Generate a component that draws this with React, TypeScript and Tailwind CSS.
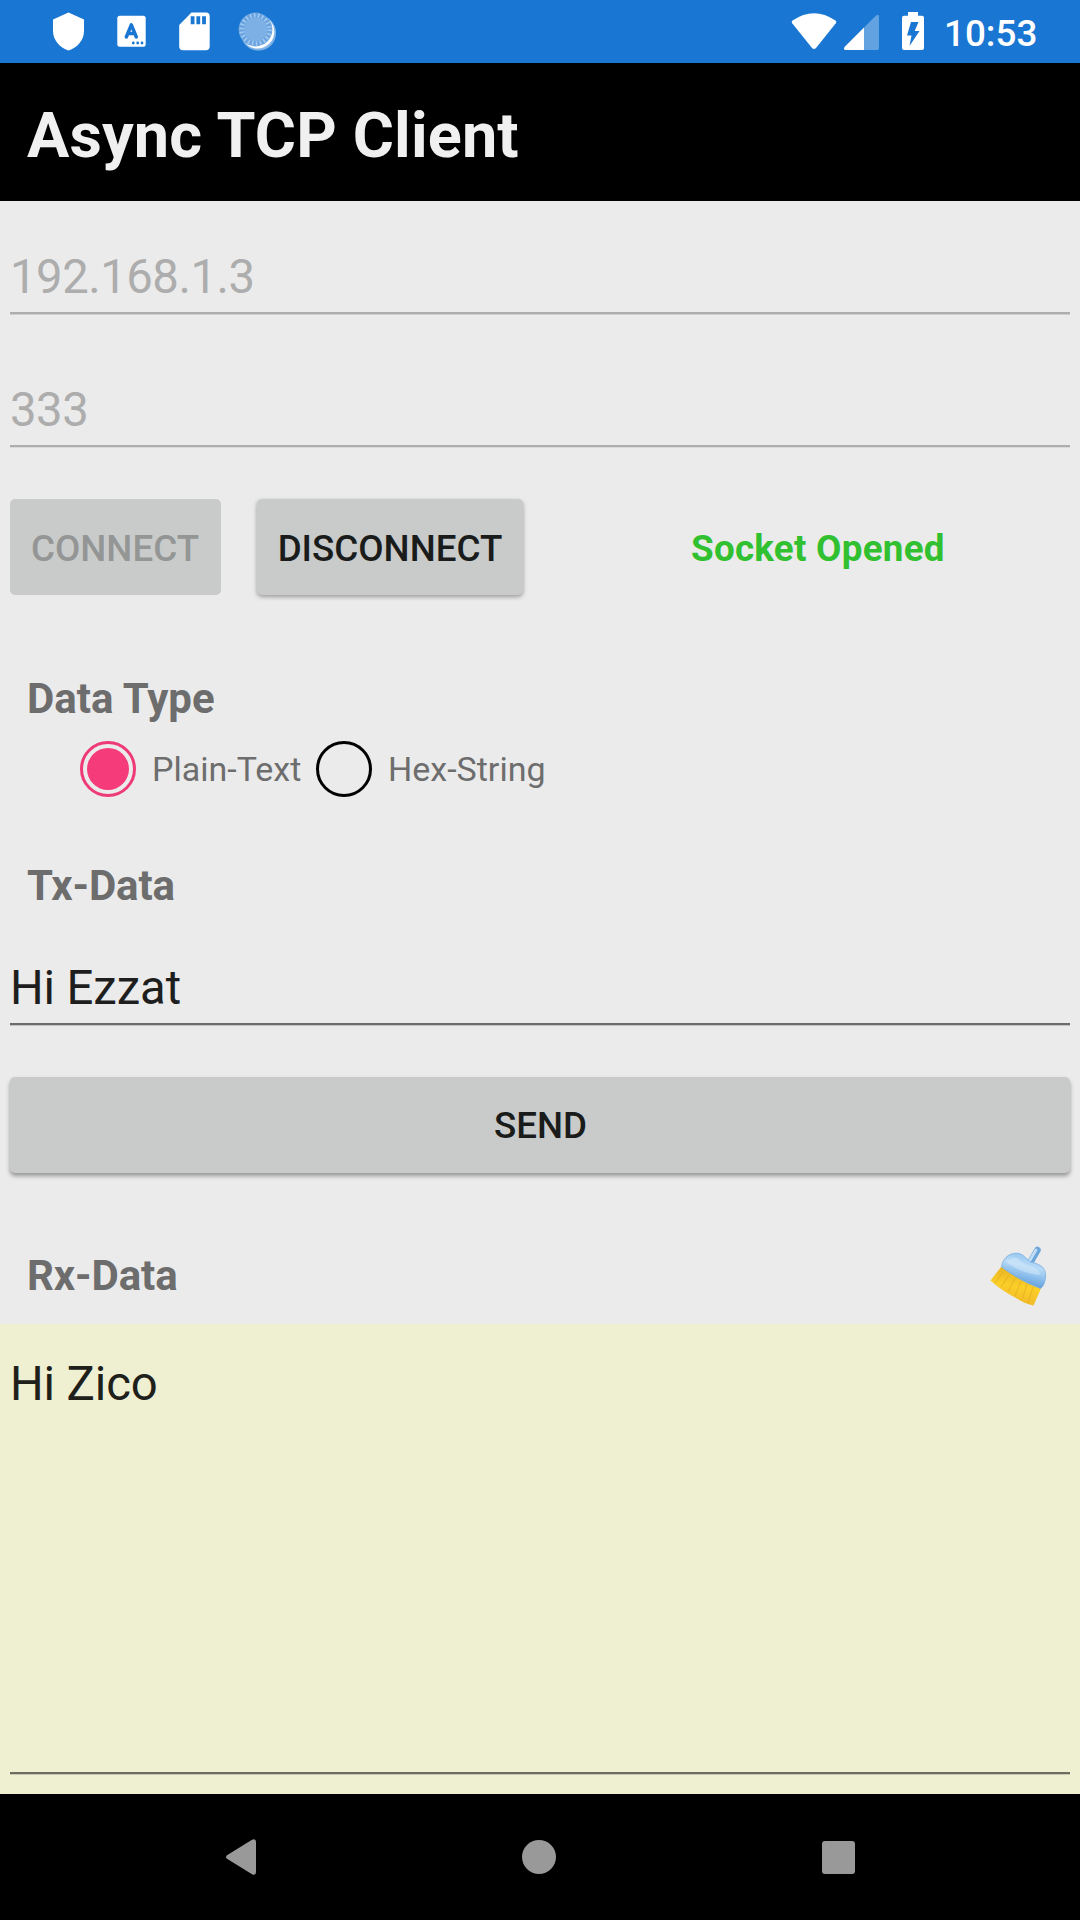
import type { ReactNode } from "react";

function StatusBar() {
  return (
    <header className="flex h-[63px] shrink-0 items-start justify-between bg-[#1976d2] text-white">
      <svg width="300" height="63" viewBox="0 0 300 63" fill="currentColor">
        <path d="M68.500 12.500 L84 19.500 V31 C84 40 77.500 47.500 68.500 50.500 C59.500 47.500 53 40 53 31 V19.500 Z" />
        <rect x="117.300" y="15.800" width="28.400" height="31" rx="2.500" />
        <path d="M126.300 37 L131.300 24.800 L136.300 37 M128 33.600 H134.800" fill="none" stroke="#1976d2" strokeWidth="3.500" strokeLinecap="round" strokeLinejoin="round" />
        <g fill="#1976d2">
          <circle cx="133.300" cy="43" r="1.400" />
          <circle cx="137.700" cy="43" r="1.400" />
          <circle cx="142" cy="43" r="1.400" />
        </g>
        <path d="M191.500 12.500 H206 Q209.700 12.500 209.700 16.200 V46.500 Q209.700 50.200 206 50.200 H183 Q179.200 50.200 179.200 46.500 V25 Z" />
        <path d="M190.700 16.200h3.800v8h-3.800z M196.400 16.200h3.800v8h-3.800z M202.100 16.200h3.800v8h-3.800z" fill="#1976d2" />
        <circle cx="258.500" cy="33" r="17.600" opacity=".45" />
        <circle cx="257.500" cy="31.700" r="16.800" />
        <circle cx="255.500" cy="29.500" r="16.900" fill="#6ba5e1" />
        <circle cx="255.500" cy="29.500" r="14" fill="none" stroke="#a5c9ee" strokeWidth="4.500" strokeDasharray="1.500 2.500" />
        <circle cx="255.500" cy="29.500" r="11.500" fill="#7db1e5" />
      </svg>
      <div className="flex h-[63px] items-start">
        <svg width="150" height="63" viewBox="780 0 150 63" fill="currentColor">
          <path d="M792.500 20.500 Q814 5.800 835.500 20.500 Q837 21.700 835.800 23.300 L816 48 Q814 50 812 48 L792.200 23.300 Q791 21.700 792.500 20.500 Z" />
          <path d="M864 27.500 V50 H846 Q842.500 50 845 46.500 Z" />
          <path d="M864 27.500 L876 15.500 Q879 13.500 879 16.500 V48 Q879 50 877 50 H864 Z" opacity=".32" />
          <path d="M908 12 H918 V15.800 H922 Q924 15.800 924 17.800 V48 Q924 50 922 50 H904 Q902 50 902 48 V17.800 Q902 15.800 904 15.800 H908 Z" />
          <path d="M911 22 H918.500 L914.700 31 H919.500 L909.500 46 L911.500 35.500 H907 Z" fill="#1976d2" />
        </svg>
        <span className="mr-[43px] w-[107px] pl-[14px] text-[36.800px] leading-[67px] font-medium whitespace-nowrap">10:53</span>
      </div>
    </header>
  );
}

function RaisedButton({ className, children }: { className: string; children: ReactNode }) {
  return (
    <button className={"flex h-24 items-center justify-center rounded-[5px] bg-[#c9cbca] text-[36.750px] leading-none font-medium " + className}>
      {children}
    </button>
  );
}

function SectionLabel({ children }: { children: ReactNode }) {
  return <h2 className="text-[42px] leading-[48px] font-bold text-[#6d6d6d]">{children}</h2>;
}

function Broom() {
  return (
    <svg width="66" height="66" viewBox="987 1242 66 66">
      <defs>
        <linearGradient id="head" x1="0.650" y1="0" x2="0.350" y2="1">
          <stop offset="0" stopColor="#8fc2ee" />
          <stop offset="0.350" stopColor="#b9dbf7" />
          <stop offset="0.650" stopColor="#84b9ea" />
          <stop offset="1" stopColor="#4c90d0" />
        </linearGradient>
        <linearGradient id="bristle" x1="0.600" y1="0" x2="0.400" y2="1">
          <stop offset="0" stopColor="#e6b024" />
          <stop offset="0.500" stopColor="#fbcf28" />
          <stop offset="1" stopColor="#f0b629" />
        </linearGradient>
      </defs>
      <path d="M1001 1267 L1041 1288.500 L1033.500 1305.500 Q1024 1303.500 1016 1298 Q1002 1291 990.500 1280.500 Z" fill="url(#bristle)" />
      <path d="M1003 1272 L995 1283 M1009 1275 L1001 1287 M1015 1278 L1008 1292 M1021 1281 L1015 1296 M1027 1284 L1022 1300 M1033 1287 L1028 1303" stroke="#dda51e" strokeWidth="1.200" opacity=".45" />
      <path d="M1030.500 1262 L1037.500 1250" stroke="#6aa6dc" strokeWidth="6.500" strokeLinecap="round" />
      <path d="M1029.500 1261 L1036 1250" stroke="#c3def4" strokeWidth="2.800" strokeLinecap="round" />
      <path d="M1001.500 1267 C1003 1256 1012 1252 1019 1253.500 C1025 1255 1027 1260.500 1031 1262 C1041 1264.500 1046 1268 1045.500 1276 C1045.500 1281 1044 1286 1040.500 1288.500 Q1020 1281 1001.500 1267 Z" fill="url(#head)" stroke="#79afe0" strokeWidth="0.800" />
      <path d="M1006 1262 Q1012 1256 1018 1258.500 Q1022 1263 1029 1266 Q1038 1268 1041 1275 Q1022 1274 1006 1262 Z" fill="#d6eafa" opacity=".5" />
    </svg>
  );
}

export default function App() {
  return (
    <div className="flex h-[1920px] w-[1080px] flex-col overflow-hidden bg-[#ebebeb] font-[Roboto,sans-serif]">
      <StatusBar />
      <div className="flex h-[138px] shrink-0 items-center bg-black pt-[7px] pl-[27px]">
        <h1 className="text-[63px] leading-none font-bold tracking-[0.150px] text-[#f0f0f0]">Async TCP Client</h1>
      </div>

      <main className="flex h-[1123px] shrink-0 flex-col">
        <div className="mx-2.5 h-[113px] border-b-2 border-[#adadad] pt-12 text-[47.250px] leading-[56px] tracking-[-0.480px] text-[#adadad] shadow-[0_1px_0_#cfcfcf]">192.168.1.3</div>
        <div className="mx-2.5 h-[133px] border-b-2 border-[#adadad] pt-[68px] text-[47.250px] leading-[56px] tracking-[-0.480px] text-[#adadad] shadow-[0_1px_0_#dadada]">333</div>

        <div className="mx-2.5 mt-[52px] flex items-center">
          <RaisedButton className="w-[211px] pt-1 pr-px text-[#949695]">CONNECT</RaisedButton>
          <RaisedButton className="ml-9 w-[266px] pt-1 text-[#1a1b1b] shadow-[0_2px_4px_rgba(0,0,0,0.34)]">DISCONNECT</RaisedButton>
          <span className="ml-[168px] pt-1 text-[36.750px] leading-none font-bold tracking-[0.270px] text-[#30c030]">Socket Opened</span>
        </div>

        <div className="mt-[80px] pl-[27px]">
          <SectionLabel>Data Type</SectionLabel>
        </div>
        <div className="mt-[18px] flex h-14 items-center pl-[79.500px] text-[34px] leading-10 text-[#6d6d6d]">
          <span className="flex size-14 items-center justify-center rounded-full border-3 border-[#ee3a78]">
            <span className="size-[42px] rounded-full bg-[#f53b79]" />
          </span>
          <span className="ml-[16.500px] w-[163.500px]">Plain-Text</span>
          <span className="size-14 rounded-full border-3 border-black" />
          <span className="ml-[16.500px]">Hex-String</span>
        </div>
        <div className="mt-[65px] pl-[27px] tracking-[-0.150px]">
          <SectionLabel>Tx-Data</SectionLabel>
        </div>
        <div className="mx-2.5 mt-[50px] h-[65px] border-b-2 border-[#6b6b6b] text-[47.250px] leading-[56px] tracking-[-0.100px] text-[#1e1e1e] shadow-[0_1px_0_#c4c4c4]">Hi Ezzat</div>
        <RaisedButton className="mx-2.5 mt-[52px] pt-[3px] pl-px text-[#1a1b1b] shadow-[0_3px_4px_rgba(0,0,0,0.36)]">SEND</RaisedButton>
        <div className="mt-[69px] flex items-start justify-between pr-[27px] pl-[27px]">
          <div className="pt-[10px] tracking-[-0.100px]">
            <SectionLabel>Rx-Data</SectionLabel>
          </div>
          <Broom />
        </div>
      </main>

      <section className="h-[470px] shrink-0 bg-[#efefd2] px-2.5 pt-8">
        <div className="h-[418px] border-b-2 border-[#6c6c5f] text-[47.250px] leading-[56px] tracking-[-0.100px] text-[#20201a] shadow-[0_1px_0_#c8c8b0]">Hi Zico</div>
      </section>

      <nav className="flex h-[126px] shrink-0 items-center justify-between bg-black pr-[225px] pl-[226px] text-[#999999]">
        <svg width="30" height="36" viewBox="0 0 30 36" fill="currentColor">
          <path d="M1 16.200 L26 .800 Q30 -1 30 3 V33 Q30 37 26 35.200 L1 19.800 Q-1 18 1 16.200 Z" />
        </svg>
        <span className="mr-[1px] size-[34px] rounded-full bg-[#999999]" />
        <span className="h-[33px] w-[33px] rounded-[3px] bg-[#999999]" />
      </nav>
    </div>
  );
}
